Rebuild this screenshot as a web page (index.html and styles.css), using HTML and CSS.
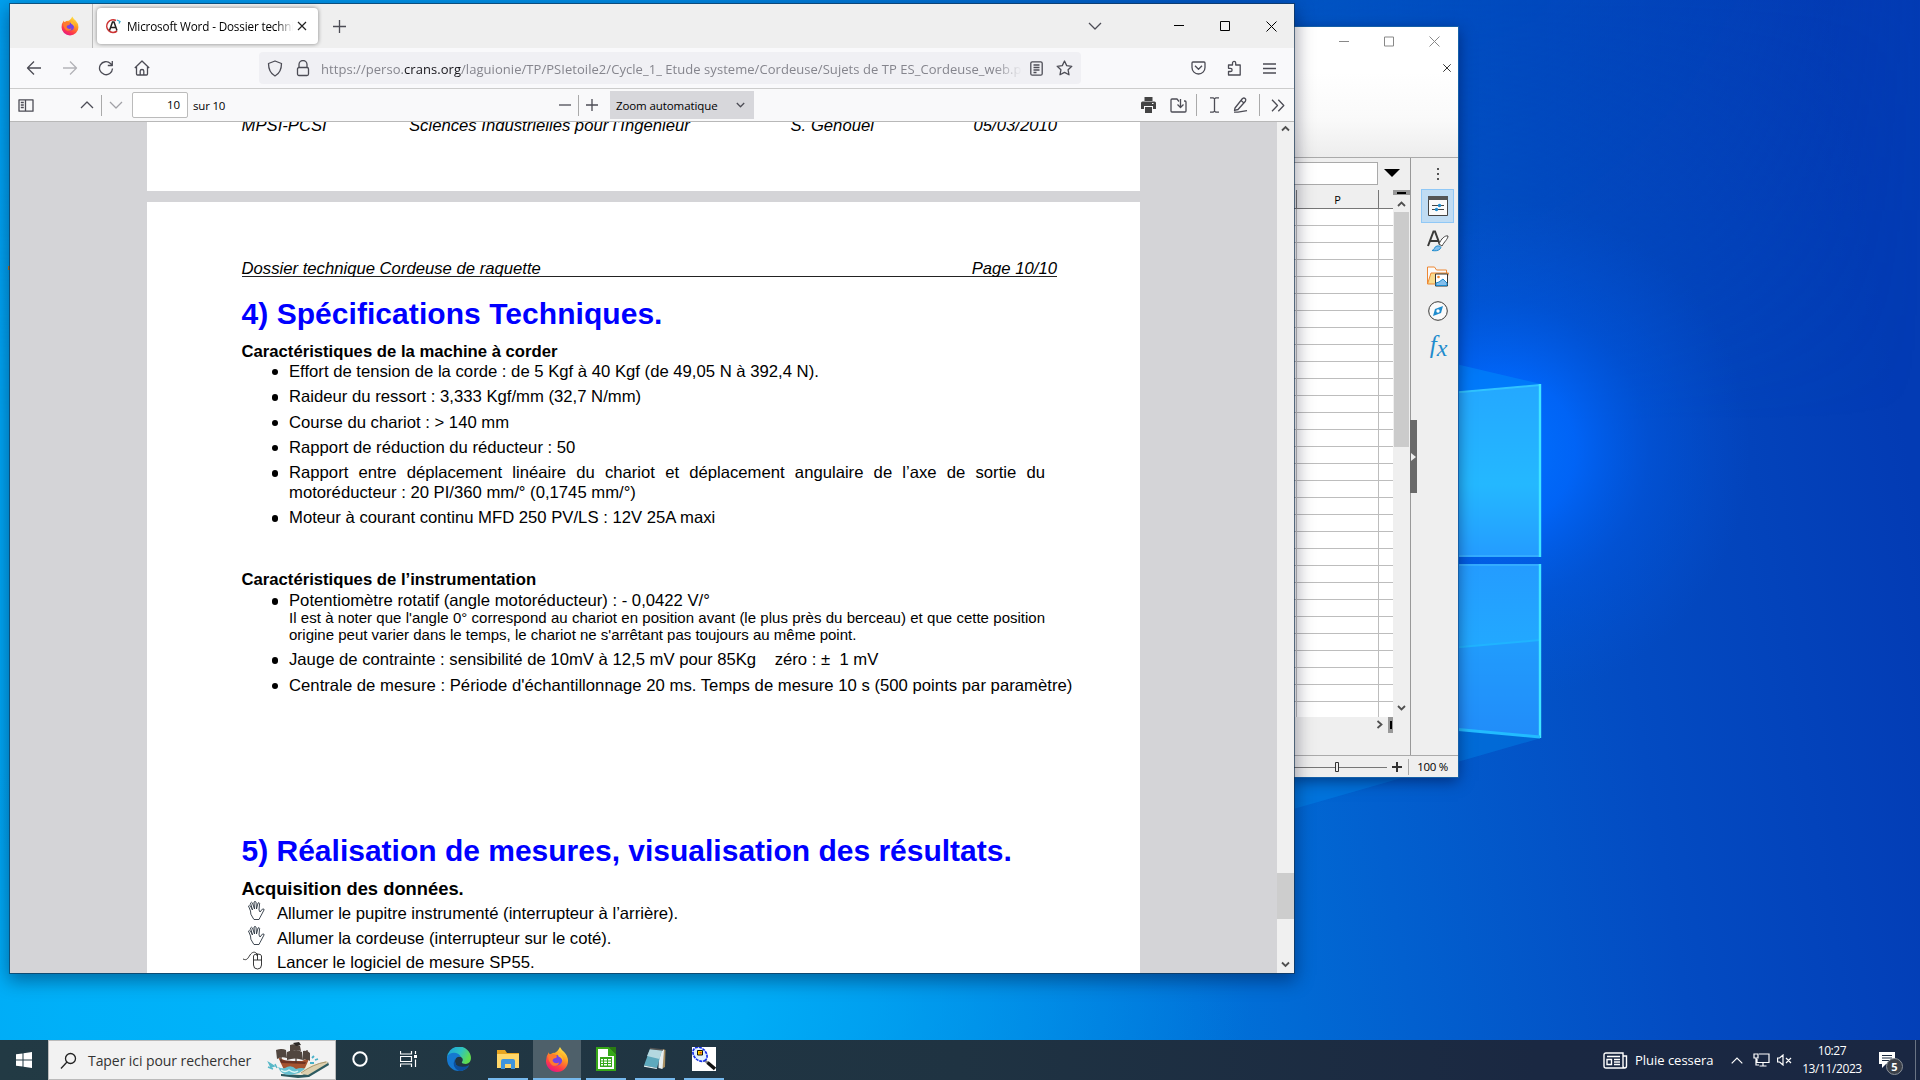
FILE: index.html
```
<!DOCTYPE html>
<html lang="fr">
<head>
<meta charset="utf-8">
<title>Bureau</title>
<link rel="stylesheet" href="styles.css">
</head>
<body>
<main class="desktop">
<svg class="wallpaper" viewBox="0 0 1920 1040" preserveAspectRatio="none" aria-hidden="true">
  <defs>
    <linearGradient id="base" gradientUnits="userSpaceOnUse" x1="0" y1="850" x2="1920" y2="520">
      <stop offset="0" stop-color="#00a8f5"/><stop offset=".35" stop-color="#0098ec"/><stop offset=".58" stop-color="#0074da"/><stop offset=".7" stop-color="#0260cf"/><stop offset=".84" stop-color="#034bc2"/><stop offset="1" stop-color="#033bb4"/>
    </linearGradient>
    <radialGradient id="low" gradientUnits="userSpaceOnUse" cx="0" cy="0" r="1" gradientTransform="translate(400 1010) scale(850 270)">
      <stop offset="0" stop-color="#00b6fb"/><stop offset=".4" stop-color="#00b2f9" stop-opacity=".8"/><stop offset="1" stop-color="#00a0f0" stop-opacity="0"/>
    </radialGradient>
    <radialGradient id="glow" gradientUnits="userSpaceOnUse" cx="1500" cy="450" r="250">
      <stop offset="0" stop-color="#0072ff"/><stop offset=".3" stop-color="#0068ff" stop-opacity=".85"/><stop offset=".6" stop-color="#005cec" stop-opacity=".4"/><stop offset="1" stop-color="#0058e0" stop-opacity="0"/>
    </radialGradient>
    <linearGradient id="pane1" x1="0" y1="0" x2="0" y2="1"><stop offset="0" stop-color="#24a8ff"/><stop offset=".58" stop-color="#24b8ff"/><stop offset="1" stop-color="#249cff"/></linearGradient>
    <linearGradient id="pane2" x1="0" y1="0" x2="0" y2="1"><stop offset="0" stop-color="#249cff"/><stop offset=".45" stop-color="#22a8ff"/><stop offset="1" stop-color="#2192fa"/></linearGradient>
    <linearGradient id="top" x1="0" y1="0" x2="1" y2="0"><stop offset="0" stop-color="#00a0f0"/><stop offset=".35" stop-color="#008ae4"/><stop offset=".62" stop-color="#0058c4"/><stop offset=".8" stop-color="#0048bc" stop-opacity=".7"/><stop offset="1" stop-color="#0339b2" stop-opacity="0"/></linearGradient>
    <linearGradient id="fade" x1="0" y1="0" x2="0" y2="1"><stop offset="0" stop-color="#fff"/><stop offset="1" stop-color="#000"/></linearGradient>
    <mask id="topMask"><rect width="1920" height="420" fill="url(#fade)"/></mask>
  </defs>
  <rect width="1920" height="1040" fill="url(#base)"/>
  <rect width="1920" height="420" fill="url(#top)" mask="url(#topMask)"/>
  <rect width="1920" height="1040" fill="url(#low)"/>
  <circle cx="1500" cy="450" r="250" fill="url(#glow)"/>
  <path d="M1290 325L1541 384L1290 406Z" fill="#00a0ff" opacity=".35"/>
  <path d="M1290 715L1541 738L1290 810Z" fill="#0090f0" opacity=".35"/>
  <path d="M1290 407L1540 385V556H1290Z" fill="url(#pane1)"/>
  <path d="M1290 565H1540V737L1290 714Z" fill="url(#pane2)"/>
  <path d="M1290 662L1540 640V737L1290 714Z" fill="#2080f8" opacity=".3"/>
  <path d="M1290 662L1540 640" stroke="#20b4ff" stroke-width="2"/>
  <path d="M1290 407L1540 385" stroke="#30c4ff" stroke-width="2"/>
  <path d="M1290 556H1540M1290 565H1540" stroke="#34acff" stroke-width="2"/>
  <path d="M1540 384V557M1540 564V738" stroke="#40e6ff" stroke-width="2.4"/>
  <path d="M1290 714L1540 737" stroke="#22bcff" stroke-width="3"/>
  <path d="M9 266v4" stroke="#b77a20" stroke-width="2"/>
</svg>

<section class="calc">
  <header class="calc-head">
    <div class="calc-controls">
      <svg width="10" height="11" viewBox="0 0 10 11"><path d="M0 5.500h10" class="gray"/></svg>
      <svg width="10" height="11" viewBox="0 0 10 11"><path d="M.5 1h9v9h-9z" class="gray"/></svg>
      <svg width="11" height="11" viewBox="0 0 11 11"><path d="M.5.5l10 10M10.500.5l-10 10" class="gray"/></svg>
    </div>
    <svg class="doc-close" width="8" height="8" viewBox="0 0 8 8"><path d="M.3.3l7.400 7.400M7.700.3L.3 7.700" stroke="#333" fill="none"/></svg>
  </header>
  <div class="calc-mid">
    <div class="calc-main">
      <div class="formula"><div class="formula-input"></div><svg width="16" height="8" viewBox="0 0 16 8"><path d="M0 0h16L8 8z"/></svg></div>
      <div class="sheet-area">
        <div class="sheet"><div class="col-head"><span class="col-p">P</span></div><div class="cells"><div class="col-a"></div><div class="col-b"></div></div></div>
        <div class="vscroll"><div class="split"></div>
          <svg width="9" height="6" viewBox="0 0 9 6"><path d="M1 5l3.500-3.500L8 5" class="arrow"/></svg>
          <div class="vthumb"></div>
          <svg width="9" height="6" viewBox="0 0 9 6"><path d="M1 1l3.500 3.500L8 1" class="arrow"/></svg>
        </div>
      </div>
      <div class="hscroll"><svg width="7" height="9" viewBox="0 0 7 9"><path d="M1.500 1l4 3.500-4 3.500" class="arrow"/></svg><i></i></div>
    </div>
    <aside class="sidebar">
      <svg width="4" height="14" viewBox="0 0 4 14"><path d="M1 1h2v2H1zM1 6h2v2H1zM1 11h2v2H1z" fill="#555"/></svg>
      <div class="deck active"><svg width="20" height="20" viewBox="0 0 20 20"><path d="M.5.5h19v19H.5z" fill="#fafafa" stroke="#444"/><path d="M0 0h20v4H0z" fill="#555"/><path d="M4 9.500h12M4 13.500h12" stroke="#444"/><circle cx="11.500" cy="9.500" r="1.700" fill="#1e8bcd"/><circle cx="8.500" cy="13.500" r="1.700" fill="#1e8bcd"/></svg></div>
      <div class="deck"><svg width="22" height="22" viewBox="0 0 22 22"><path d="M1 16L6.500 1.500h1.500L13 15M3 11h8" fill="none" stroke="#3a3a38" stroke-width="2"/><path d="M12 14c2-5 6-9 9-8 0 3-4 6-6 10z" fill="#fff" stroke="#444"/><path d="M5 20.500c3-.5 2-4 5-4.500 3-.4 5 1 3 3-2 2-5 2-8 1.500z" fill="#83beec" stroke="#1e8bcd"/></svg></div>
      <div class="deck"><svg width="22" height="21" viewBox="0 0 22 21"><path d="M.5 18V1h7l2 3h10v3" fill="#fafafa" stroke="#ed8733"/><path d="M.5 18L4 7h17.500L18 18z" fill="#f8db8f" stroke="#ed8733"/><path d="M8.500 8h12v12h-12z" fill="#fff" stroke="#333"/><circle cx="11.500" cy="11" r="1.300" fill="#ed8733"/><path d="M9 19.500V17l3-1 4-3 4 4v2.500z" fill="#83beec" stroke="#1e8bcd"/></svg></div>
      <div class="deck"><svg width="20" height="20" viewBox="0 0 20 20"><circle cx="10" cy="10" r="9.300" fill="#fafafa" stroke="#3a3a38"/><path d="M15 5l-2 7-8 3 2-7z" fill="#1e8bcd"/><circle cx="10" cy="10" r="1.700" fill="#fff"/></svg></div>
      <div class="deck fx"><span>f</span><span class="x">x</span></div>
    </aside>
    <div class="handle"><svg width="5" height="8" viewBox="0 0 5 8"><path d="M0 0l5 4-5 4z" fill="#eee"/></svg></div>
  </div>
  <footer class="calc-status">
    <svg width="112" height="12" viewBox="0 0 112 12"><path d="M0 6.500h93" stroke="#777"/><path d="M41.500 1.500h3v9h-3z" fill="#eee" stroke="#333"/><path d="M98 6h10M103 1v10" stroke="#333" stroke-width="2"/></svg>
    <span class="zoomval">100 %</span>
  </footer>
</section>

<section class="browser">
  <header class="tabs">
    <div class="pinned"><svg width="18" height="20" viewBox="0 0 32 34"><use href="#fox"/></svg></div>
    <div class="tab">
      <svg width="16" height="16" viewBox="0 0 16 16"><path d="M11 2.500A6.300 6.300 0 1 0 12 13" fill="none" stroke="#c33" stroke-width="1.600"/><path d="M4.500 12.500L7.500 4h1.500l3 8.500M5.500 9.500h5" fill="none" stroke="#222" stroke-width="1.500"/><path d="M12 2l3 1.500-1 2" stroke="#3ac" fill="none" stroke-width="1.300"/></svg>
      <span class="tab-title">Microsoft Word - Dossier technique</span>
      <svg width="10" height="10" viewBox="0 0 10 10"><path d="M1 1l8 8M9 1L1 9" stroke="#222" stroke-width="1.200"/></svg>
    </div>
    <svg class="plus" width="13" height="13" viewBox="0 0 13 13"><path d="M0 6.500h13M6.500 0v13" class="ink"/></svg>
    <div class="controls">
      <svg class="tablist" width="14" height="8" viewBox="0 0 14 8"><path d="M1 1l6 6 6-6" class="ink"/></svg>
      <svg width="10" height="10" viewBox="0 0 10 10"><path d="M0 4.500h10" stroke="#000"/></svg>
      <svg width="10" height="10" viewBox="0 0 10 10"><path d="M.5.5h9v9h-9z" fill="none" stroke="#000"/></svg>
      <svg width="11" height="11" viewBox="0 0 11 11"><path d="M.5.5l10 10M10.500.5l-10 10" stroke="#000" fill="none"/></svg>
    </div>
  </header>
  <nav class="navbar">
    <div class="navbtns">
      <svg width="16" height="16" viewBox="0 0 16 16"><path d="M15 8H1.500M8 1.500L1.500 8 8 14.500" class="ink"/></svg>
      <svg width="16" height="16" viewBox="0 0 16 16" opacity=".4"><path d="M1 8h13.500M8 1.500L14.500 8 8 14.500" class="ink"/></svg>
      <svg width="16" height="16" viewBox="0 0 16 16"><path d="M14.500 8.500A6.500 6.500 0 1 1 12.500 3.500L14 5M14.300 1v4.500H9.800" class="ink"/></svg>
      <svg width="16" height="16" viewBox="0 0 16 16"><path d="M.8 8L8 1l7.200 7M2.500 7v7q0 1 1 1h9q1 0 1-1V7M6.200 15v-4q0-1.500 1.800-1.500T9.800 11v4" class="ink"/></svg>
    </div>
    <div class="urlbar">
      <svg width="16" height="17" viewBox="0 0 16 17"><path d="M8 1l6.500 2.500q0 9-6.500 12.500Q1.500 12.500 1.500 3.500z" class="ink"/></svg>
      <svg width="14" height="17" viewBox="0 0 14 17"><path d="M3 8V4.500a4 4 0 0 1 8 0V8" class="ink"/><rect x="1.500" y="7.500" width="11" height="8" rx="1.500" class="ink"/></svg>
      <span class="url">https://perso.<b>crans.org</b>/laguionie/TP/PSIetoile2/Cycle_1_ Etude systeme/Cordeuse/Sujets de TP ES_Cordeuse_web.pdf</span>
      <svg width="13" height="15" viewBox="0 0 13 15"><rect x=".8" y=".8" width="11.400" height="13.400" rx="1.500" class="ink"/><path d="M3.500 4h6M3.500 6.500h6M3.500 9h6M3.500 11.500h3" class="ink"/></svg>
      <svg width="17" height="16" viewBox="0 0 17 16"><path d="M8.500 1l2.200 4.600 5.100.7-3.700 3.500.9 5-4.500-2.400L4 14.800l.9-5L1.200 6.300l5.100-.7z" class="ink"/></svg>
    </div>
    <div class="navright">
      <svg width="15" height="14" viewBox="0 0 15 14"><path d="M1 2q0-1 1-1h11q1 0 1 1v4.500a6.500 6.500 0 0 1-13 0zM4 4.800l3.500 3.500L11 4.800" class="ink"/></svg>
      <svg width="15" height="16" viewBox="0 0 15 16"><path d="M1.500 5h4V3a1.600 1.600 0 0 1 3.200 0v2h4.500v10H1.500v-3.500h2a1.600 1.600 0 0 0 0-3.200h-2z" class="ink"/></svg>
      <svg width="13" height="11" viewBox="0 0 13 11"><path d="M0 1h13M0 5.500h13M0 10h13" class="ink"/></svg>
    </div>
  </nav>
  <div class="pdfbar">
    <svg class="side" width="16" height="13" viewBox="0 0 16 13"><path d="M1 .8h14v11.400H1zM7.500 1v11M2.800 3.500h3M2.800 6h3M2.800 8.500h3" class="ink"/></svg>
    <svg width="14" height="8" viewBox="0 0 14 8"><path d="M1 7l6-6 6 6" class="ink"/></svg>
    <i class="sep"></i>
    <svg width="14" height="8" viewBox="0 0 14 8" opacity=".5"><path d="M1 1l6 6 6-6" class="ink"/></svg>
    <span class="pageno">10</span><span class="total">sur 10</span>
    <div class="zoomctl">
      <svg width="12" height="12" viewBox="0 0 12 12"><path d="M0 6h12" class="ink"/></svg>
      <i class="sep"></i>
      <svg width="12" height="12" viewBox="0 0 12 12"><path d="M0 6h12M6 0v12" class="ink"/></svg>
      <div class="select"><span>Zoom automatique</span><svg width="9" height="6" viewBox="0 0 9 6"><path d="M.8 1l3.700 3.700L8.200 1" class="ink"/></svg></div>
    </div>
    <div class="tools">
      <svg width="15" height="16" viewBox="0 0 15 16"><path d="M3.500 0h8v4h-8zM1.500 4.500h12q1.500 0 1.500 1.500v6h-3V9H3v3H0V6q0-1.500 1.500-1.500zM4 10h7v6H4z" fill="#444"/><path d="M11 6h1.500v1H11z" fill="#fff"/></svg>
      <svg width="17" height="15" viewBox="0 0 17 15"><path d="M9 3.500l-2-2.500H2q-1 0-1 1v11q0 1 1 1h13q1 0 1-1V4q0-1-1-1h-1M10.500 1v8M7.500 6.500l3 3 3-3" class="ink"/></svg>
      <i class="sep"></i>
      <svg width="9" height="16" viewBox="0 0 9 16"><path d="M0 .8h3l1.500 1L6 .8h3M4.500 1.800v12.400M0 15.200h3l1.500-1 1.500 1h3" class="ink"/></svg>
      <svg width="15" height="16" viewBox="0 0 15 16"><path d="M2 11L9.500 1.500q1.500-1 2.600 0t.3 2.700L5 12.500l-3.500.8zM8 3.500L11 6M1 15.200h4l9-1.500" class="ink"/></svg>
      <i class="sep"></i>
      <svg width="14" height="13" viewBox="0 0 14 13"><path d="M1 .8l5.500 5.700L1 12.200M7.300.8l5.500 5.700-5.500 5.700" class="ink"/></svg>
    </div>
  </div>
  <div class="viewer">
    <div class="pages">
      <article class="page first"><p class="foot"><span>MPSI-PCSI</span><span>Sciences Industrielles pour l’Ingénieur</span><span>S. Génouël</span><span>05/03/2010</span></p></article>
      <article class="page second">
        <p class="runhead"><span>Dossier technique Cordeuse de raquette</span><span>Page 10/10</span></p>
        <h1>4) Spécifications Techniques.</h1>
        <h2>Caractéristiques de la machine à corder</h2>
        <ul class="specs">
          <li>Effort de tension de la corde : de 5 Kgf à 40 Kgf (de 49,05 N à 392,4 N).</li>
          <li>Raideur du ressort : 3,333 Kgf/mm (32,7 N/mm)</li>
          <li>Course du chariot : &gt; 140 mm</li>
          <li>Rapport de réduction du réducteur : 50</li>
          <li><span class="just">Rapport entre déplacement linéaire du chariot et déplacement angulaire de l’axe de sortie du</span><span class="ln">motoréducteur : 20 PI/360 mm/° (0,1745 mm/°)</span></li>
          <li>Moteur à courant continu MFD 250 PV/LS : 12V 25A maxi</li>
        </ul>
        <h2 class="instr">Caractéristiques de l’instrumentation</h2>
        <ul class="specs">
          <li>Potentiomètre rotatif (angle motoréducteur) : - 0,0422 V/°<span class="just note lead">Il est à noter que l'angle 0° correspond au chariot en position avant (le plus près du berceau) et que cette position</span><span class="ln note">origine peut varier dans le temps, le chariot ne s'arrêtant pas toujours au même point.</span></li>
          <li class="gauge">Jauge de contrainte : sensibilité de 10mV à 12,5 mV pour 85Kg &nbsp;&nbsp; zéro : ± &nbsp;1 mV</li>
          <li class="last">Centrale de mesure : Période d'échantillonnage 20 ms. Temps de mesure 10 s (500 points par paramètre)</li>
        </ul>
        <h1 class="five">5) Réalisation de mesures, visualisation des résultats.</h1>
        <h2 class="acq">Acquisition des données.</h2>
        <ul class="steps">
          <li><svg width="36" height="20" viewBox="0 0 36 20"><use href="#hand"/></svg>Allumer le pupitre instrumenté (interrupteur à l’arrière).</li>
          <li><svg width="36" height="20" viewBox="0 0 36 20"><use href="#hand"/></svg>Allumer la cordeuse (interrupteur sur le coté).</li>
          <li><svg width="36" height="20" viewBox="0 0 36 20"><path d="M1 9c4 2 5-1 7-4s5-4 7-1v2M11.500 6q0-2 4-2t4 2v9q0 4-4 4t-4-4zM11.500 10h8M15.500 4v6" fill="none" stroke="#222" stroke-width=".9"/></svg>Lancer le logiciel de mesure SP55.</li>
        </ul>
      </article>
    </div>
    <div class="scroll"><svg width="9" height="7" viewBox="0 0 9 7"><path d="M1 5.500L4.500 2 8 5.500" class="arrow"/></svg><div class="thumb"></div><svg width="9" height="7" viewBox="0 0 9 7"><path d="M1 1.500L4.500 5 8 1.500" class="arrow"/></svg></div>
  </div>
</section>
</main>

<footer class="taskbar">
  <div class="start"><svg width="16" height="16" viewBox="0 0 16 16"><path d="M0 2.300l6.500-.9v6.100H0zM7.500 1.200L16 0v7.500H7.500zM0 8.500h6.500v6.100L0 13.700zM7.500 8.500H16V16l-8.500-1.200z" fill="#fff"/></svg></div>
  <div class="search">
    <svg width="17" height="17" viewBox="0 0 17 17"><circle cx="10.500" cy="6.500" r="5" fill="none" stroke="#222" stroke-width="1.300"/><path d="M7 10l-6 6.500" stroke="#222" stroke-width="1.300"/></svg>
    <span>Taper ici pour rechercher</span>
    <svg class="ship" width="64" height="38" viewBox="0 0 64 38"><path d="M14 33l20 1 7-2 20-11 1 3-20 12-11 1-17-2z" fill="#2c5a60"/><path d="M22 32q12-8 22-11l5 2-14 11z" fill="#f2ead6"/><path d="M34 33q10-10 26-13l1 2-20 12z" fill="#dccfae"/><path d="M34 32q12-9 25-11" stroke="#a8966c" fill="none"/><path d="M11 16l8 4 16 0 8-4-5 11-6 4H18z" fill="#a5532f"/><path d="M13 19l26 2-1 2-24-1z" fill="#6e3322"/><path d="M2 22l5 3-3 1zM8 23l2 4M1 26l5 2" stroke="#58b8c8" stroke-width="1.500" fill="#58b8c8"/><path d="M11 26q4 2 7 1 6-4 11 1 6-2 9 0l-6 4-9 2q-9 0-12-8z" fill="#66c0d0"/><path d="M14 29q4 3 8 0 5 4 9 1" stroke="#dff6f6" fill="none" stroke-width="1.300"/><path d="M29 2v20M14 8v12M40 9v10" stroke="#49382f" stroke-width="1.200"/><path d="M9 9q6-2 10 0l1 8q-6-2-10 1zM20 11q8-4 15 0l1 8q-8-3-16 0zM23 4q5-2 10 1l1 5q-6-2-11 0zM36 10q4-1 7 2v8q-3-3-7-1z" fill="#51463f"/><path d="M26 2l6-1 2 3-5 1z" fill="#2e2a28"/><path d="M45 17l2-2M43 22l4 0M48 19l3-1" stroke="#48b0c8" stroke-width="1.800"/></svg>
  </div>
  <div class="app plain"><svg width="18" height="18" viewBox="0 0 18 18"><circle cx="9" cy="9" r="6.700" fill="none" stroke="#fff" stroke-width="2"/></svg></div>
  <div class="app plain"><svg width="17" height="16" viewBox="0 0 17 16"><path d="M.5 0v3h11V0M.5 16v-3h11v3M.5 5.500h11v5H.5zM15.500 0v3M15.500 8.500V16" fill="none" stroke="#fff" stroke-width="1.200"/><path d="M14 4h3v3h-3z" fill="#fff"/></svg></div>
  <div class="app"><svg width="24" height="24" viewBox="0 0 24 24"><defs><linearGradient id="eg" x1="0" y1="0" x2="1" y2=".4"><stop offset="0" stop-color="#1aa0e0"/><stop offset=".6" stop-color="#2fc3c0"/><stop offset="1" stop-color="#5fdc50"/></linearGradient></defs><path d="M0 12A12 12 0 0 1 24 11q0 5-5 6-5 0-4-2 2-3-1-5Q8 6 0 12z" fill="url(#eg)"/><path d="M0 12q0-5 5-6 6-1 9 4-5-1-6 4 0 6 7 7 4 0 7-3-3 6-10 6A12 12 0 0 1 0 12z" fill="#1578cf"/><path d="M8 12q-2 10 14 7-4 5-10 5Q4 20 8 12z" fill="#0c4f9c"/></svg></div>
  <div class="app run"><svg width="22" height="19" viewBox="0 0 22 19"><path d="M0 0h8l2 3h12v15H0z" fill="#e8a520"/><path d="M0 4h22v14H0z" fill="#ffd76a"/><path d="M4 19v-8q0-2 2-2h10q2 0 2 2v8h-4v-5H8v5z" fill="#3e94dc"/></svg></div>
  <div class="app run on"><svg width="24" height="25" viewBox="0 0 32 34"><defs><linearGradient id="fg" x1=".8" y1="0" x2=".3" y2="1"><stop offset="0" stop-color="#fff04a"/><stop offset=".4" stop-color="#ff9a20"/><stop offset=".75" stop-color="#ff3b47"/><stop offset="1" stop-color="#e31587"/></linearGradient></defs><g id="fox"><path d="M20 0q2 4 6 7 5 5 5 12a15 15 0 0 1-30 0Q1 12 5 7q0 3 2 3 4-3 5-2 5-1 8-8z" fill="url(#fg)"/><circle cx="16" cy="18" r="7" fill="#7543e3"/><path d="M4 12q6-5 12 0l-1 3q-5 0-5 4 3 5 9 2-2 6-9 4-6-4-6-13z" fill="#ff7a2e"/><path d="M17 8q8 3 7 11-2-5-6-6z" fill="#ffbd2e"/></g></svg></div>
  <div class="app run"><svg width="20" height="24" viewBox="0 0 20 24"><path d="M0 0h13l7 7v17H0z" fill="#36a818"/><path d="M2 2h10v7h6v13H2z" fill="#fff"/><path d="M13 0h7v7z" fill="#2a7c12"/><path d="M4 10h12v10H4z" fill="#36a818"/><path d="M5 12h2v1.500H5zM8 12h3v1.500H8zM12 12h3v1.500h-3zM5 14.500h2V16H5zM8 14.500h3V16H8zM12 14.500h3V16h-3zM5 17h2v1.500H5zM8 17h3v1.500H8zM12 17h3v1.500h-3z" fill="#fff"/></svg></div>
  <div class="app run"><svg width="24" height="24" viewBox="0 0 24 24"><path d="M20 2l2.500 1-.5 17-4 2z" fill="#a88f62"/><path d="M16 2l5 1-1.500 19-4-1z" fill="#e6eef0"/><path d="M7 2l12 1-5 18-13-2.500z" fill="#5ea9bd"/><path d="M7 2l12 1-2.500 9L4 9z" fill="#b4d8e0"/><path d="M1 18.500L14 21l-.3 1L1 19.700z" fill="#e8f4f6"/><path d="M7 1.500l13 1.500" stroke="#555" stroke-width="1.500"/></svg></div>
  <div class="app run"><svg width="24" height="24" viewBox="0 0 24 24"><path d="M0 0h24v24H0z" fill="#fff"/><path d="M12 13l4 3" stroke="#888" stroke-width="2.500"/><path d="M15.500 15.500L23 22" stroke="#111" stroke-width="3.500"/><ellipse cx="8" cy="7.300" rx="8" ry="6" transform="rotate(45 8 7.300)" fill="#e2f2ff" stroke="#1530e8" stroke-width="1.700" stroke-dasharray="3 .8"/><path d="M5.500 3.500h5v4.500h-5z" fill="#ffd800" stroke="#111"/><path d="M7.500 5h2v1.500h-2z" fill="#d22"/></svg></div>
  <div class="tray">
    <svg width="25" height="17" viewBox="0 0 25 17"><path d="M1 3q0-2 2-2h17v13q0 2 2 2H3q-2 0-2-2zM20 4h3.500v10q0 2-2 2M4 4.500h13M11 7.500h6M11 10h6M11 12.500h6M4 7.500h4.500v5H4z" fill="none" stroke="#fff" stroke-width="1.400"/></svg>
    <span class="weather">Pluie cessera</span>
    <svg class="up" width="12" height="7" viewBox="0 0 12 7"><path d="M.7 6.300L6 1l5.300 5.300" class="wh"/></svg>
    <svg class="net" width="17" height="14" viewBox="0 0 17 14"><path d="M6 1h10v8.500H4V6M10 9.500V13M6.500 13h7M1 1h4v4H1zM3 5v7h3" class="wh"/></svg>
    <svg class="vol" width="15" height="12" viewBox="0 0 15 12"><path d="M.6 4h2L6 1v10L2.600 8h-2zM9 4l5 5M14 4L9 9" class="wh"/></svg>
    <div class="clock"><span>10:27</span><span>13/11/2023</span></div>
    <div class="notif"><svg width="17" height="16" viewBox="0 0 17 16"><path d="M0 0h16v12H7l-4 4v-4H0z" fill="#fff"/><path d="M3 3.500h10M3 6h10M3 8.500h7" stroke="#1b2a40"/></svg><b>5</b></div>
    <i class="peek"></i>
  </div>
</footer>
<svg width="0" height="0" class="defs"><defs><g id="hand" fill="#fff" stroke="#2a3440" stroke-width=".9" stroke-linejoin="round"><path d="M11 17Q8 13 8.500 10L6.500 5q1-1.500 2 0l2 4-2-7q1-1.500 2 0l2 6L12 1q1.300-1.200 2 0l.5 7L16 2q1.300-.8 1.600.3L17 9l1 2 2.500-3q2-.5 1.500 1l-4 7.500-1 2h-5z"/></g></defs></svg>
</body>
</html>
```
FILE: styles.css
```
* { box-sizing: border-box; }
body { margin: 0; width: 1920px; height: 1080px; overflow: hidden; display: flex; flex-direction: column; font-family: "Open Sans", sans-serif; font-size: 12px; color: #000; }
svg { display: block; flex: none; }
.defs { position: absolute; }
.desktop { position: relative; flex: none; height: 1040px; overflow: hidden; }
.wallpaper { position: absolute; inset: 0; width: 1920px; height: 1040px; }
.ink { fill: none; stroke: #4c4c55; stroke-width: 1.3; stroke-linejoin: round; }
.gray { fill: none; stroke: #888; }
.arrow { fill: none; stroke: #505050; stroke-width: 1.8; }
.wh { fill: none; stroke: #fff; stroke-width: 1.2; }

/* Spreadsheet window */
.calc { position: absolute; left: 1290px; top: 27px; width: 168px; height: 750px; display: flex; flex-direction: column; background: #efefef; box-shadow: 0 0 0 1px #1560a8, 0 4px 14px rgba(0,0,40,.5); }
.calc-head { height: 131px; flex: none; background: linear-gradient(#fff 35%, #fafafa 70%, #ededed); border-bottom: 1px solid #aaa; padding: 9px 18px 0 0; display: flex; flex-direction: column; align-items: flex-end; }
.calc-controls { display: flex; gap: 35px; }
.doc-close { margin: 17px -11px 0 0; }
.calc-mid { flex: 1; display: flex; position: relative; min-height: 0; }
.calc-main { width: 120px; display: flex; flex-direction: column; }
.formula { height: 32px; display: flex; align-items: center; gap: 6px; padding-bottom: 2px; }
.formula-input { width: 88px; height: 23px; border: 1px solid #aaa; background: #fff; border-left: 0; }
.formula svg { margin: -1px 0 0 0; }
.sheet-area { height: 527px; display: flex; }
.sheet { width: 103px; display: flex; flex-direction: column; }
.col-head { height: 19px; flex: none; border-bottom: 1px solid #777; display: flex; padding-left: 6px; font-size: 11px; line-height: 19px; }
.col-p { width: 83px; text-align: center; border: solid #777; border-width: 0 1px; }
.cells { flex: 1; display: flex; padding-left: 6px; background: repeating-linear-gradient(#fff 0 16px, #bdbdbd 16px 17px); }
.col-a { width: 83px; border: solid #bdbdbd; border-width: 0 1px; }
.vscroll { width: 17px; display: flex; flex-direction: column; align-items: center; padding-bottom: 6px; }
.split { width: 17px; height: 5px; border: solid #999; border-width: 2px 4px 1px; background: #000; }
.vscroll > svg { margin-top: 6px; }
.vthumb { width: 15px; height: 235px; background: #cbcbcb; margin: 5px 0 auto; }
.hscroll { display: flex; justify-content: flex-end; align-items: center; height: 15px; gap: 5px; padding-right: 17px; }
.hscroll i { width: 5px; height: 16px; border: solid #999; border-width: 4px 1px 4px 2px; background: #000; }
.sidebar { width: 48px; border-left: 1px solid #999; display: flex; flex-direction: column; align-items: center; padding: 9px 0 0 6px; }
.deck { width: 33px; height: 34px; margin-bottom: 1px; display: flex; align-items: center; justify-content: center; }
.deck.active { margin-top: 8px; background: #c0dcf3; border: 1px solid #90c8f6; }
.fx { font: italic 25px/1 "Liberation Serif", serif; color: #1e8bcd; padding: 0 0 3px 2px; }
.fx .x { margin-top: 7px; font-size: 24px; }
.handle { position: absolute; left: 120px; top: 262px; width: 7px; height: 73px; background: #696969; display: flex; align-items: center; padding-left: 1px; }
.calc-status { height: 22px; flex: none; border-top: 1px solid #aaa; display: flex; align-items: center; padding-left: 4px; font-size: 11.500px; }
.zoomval { flex: 1; height: 16px; line-height: 16px; border-left: 1px solid #aaa; margin-left: 2px; padding-right: 2px; text-align: center; letter-spacing: -.3px; }

/* Browser window */
.browser { position: absolute; left: 10px; top: 4px; width: 1284px; height: 969px; display: flex; flex-direction: column; background: #efefef; box-shadow: 0 0 0 1px rgba(20,50,80,.65), 0 6px 17px 2px rgba(0,0,30,.38); }
.tabs { height: 44px; flex: none; display: flex; align-items: center; background: #efefef; }
.pinned { width: 83px; height: 44px; border-right: 1px solid #bbb; display: flex; align-items: center; padding-left: 51px; }
.tab { margin: 0 0 0 4px; width: 221px; height: 36px; background: #fff; border-radius: 4px; box-shadow: 0 0 4px rgba(0,0,0,.45); display: flex; align-items: center; padding: 0 11px 0 8px; }
.tab-title { width: 167px; margin: 0 4px 0 6px; overflow: hidden; white-space: nowrap; font-size: 11.700px; letter-spacing: -.15px; -webkit-mask-image: linear-gradient(90deg, #000 90%, transparent); mask-image: linear-gradient(90deg, #000 90%, transparent); }
.plus { margin-left: 15px; }
.controls { margin-left: auto; display: flex; align-items: center; gap: 36px; padding-right: 17.500px; }
.tablist { margin-right: 36px; }
.navbar { height: 41px; flex: none; display: flex; align-items: center; background: #f9f9fb; border-bottom: 1px solid #ccc; }
.navbtns { width: 249px; display: flex; gap: 20px; padding-left: 16px; }
.urlbar { width: 822px; height: 32px; border-radius: 4px; background: #f0f0f4; display: flex; align-items: center; padding: 0 8px; }
.urlbar svg + svg { margin-left: 13px; }
.url { width: 701px; margin: 2px 8px 0 11px; overflow: hidden; white-space: nowrap; color: #85858d; font-size: 13px; letter-spacing: .05px; line-height: 20px; -webkit-mask-image: linear-gradient(90deg, #000 96%, transparent); mask-image: linear-gradient(90deg, #000 96%, transparent); }
.url b { font-weight: 400; color: #15141a; }
.navright { margin-left: auto; display: flex; align-items: center; gap: 21px; padding-right: 18px; }
.pdfbar { height: 33px; flex: none; display: flex; align-items: center; background: #f9f9fa; border-bottom: 1px solid #b8b8b8; font-size: 11.500px; letter-spacing: -.1px; }
.side { margin: 0 46px 0 8px; }
.sep { width: 1px; height: 21px; background: #aaa; margin: 0 7px; }
.pageno { width: 56px; height: 26px; margin-left: 9px; border: 1px solid #bbb; border-radius: 2px; background: #fff; text-align: right; padding-right: 7px; line-height: 24px; }
.total { margin-left: 5px; letter-spacing: -.2px; }
.zoomctl { display: flex; align-items: center; margin-left: auto; }
.select { margin-left: 12px; width: 144px; height: 28px; background: #d7d7db; display: flex; align-items: center; justify-content: space-between; padding: 0 9px 0 6px; }
.tools { display: flex; align-items: center; margin-left: 387px; padding-right: 9px; }
.tools svg + svg { margin-left: 14px; }
.tools .sep { height: 22px; margin: 0 13px 0 9px; }
.tools .sep:last-of-type { margin: 0 11px; }
.viewer { flex: 1; min-height: 0; display: flex; background: #d4d4d7; }
.pages { flex: 1; padding-left: 137px; overflow: hidden; display: flex; flex-direction: column; }
.scroll { width: 17px; background: #f0f0f0; display: flex; flex-direction: column; align-items: center; padding: 3px 0 5px; }
.thumb { width: 17px; height: 46px; background: #cdcdcd; margin: 741px 0 auto; }

/* Document */
.page { width: 993px; background: #fff; flex: none; font-family: "Liberation Sans", Arial, sans-serif; padding: 0 83px 0 94.500px; font-size: 16.680px; line-height: 20px; }
.page p, .page h1, .page h2, .page ul { margin: 0; padding: 0; list-style: none; }
.first { height: 69px; overflow: hidden; margin-bottom: 11px; }
.page .foot { display: grid; grid-template-columns: 167.500px 381.500px 1fr auto; font-style: italic; margin-top: -6px; white-space: nowrap; }
.second { height: 780px; padding-top: 57px; }
.second .runhead { display: flex; justify-content: space-between; font-style: italic; height: 18px; border-bottom: 1.500px solid #222; line-height: 20px; }
.page h1 { font-size: 30px; letter-spacing: .05px; line-height: 36px; color: #00f; white-space: nowrap; }
.page .runhead + h1 { margin-top: 19px; }
.page h2 { font-size: 16.680px; line-height: 20px; margin-top: 9px; white-space: nowrap; }
.page h1:not(.five) + h2 { margin-top: 10px; }
.page .specs { padding-left: 47.500px; }
.specs li { white-space: nowrap; width: 756px; margin-bottom: 5.300px; position: relative; }
.specs li::before { content: ""; position: absolute; left: -17px; top: 7px; width: 6.400px; height: 6.400px; border-radius: 50%; background: #000; }
.specs .last { letter-spacing: .02px; }
.specs .gauge { margin-top: 7.300px; }
.just, .ln { display: block; }
.just { white-space: normal; text-align-last: justify; }
.page .note { font-size: 15px; line-height: 17px; }
.page .lead { margin-top: -2.500px; }
.page .instr { margin-top: 42px; }
.instr + .specs { padding-top: 1px; }
.page .five { letter-spacing: 0; margin-top: 137px; }
.page .acq { font-size: 18.350px; margin-top: 8px; line-height: 24px; }
.page .steps { padding-top: 1.500px; }
.steps li { display: flex; height: 24.700px; line-height: 24.700px; white-space: nowrap; }
.steps svg { margin: -1px -.5px 0 0; }

/* Taskbar */
.taskbar { height: 40px; flex: none; display: flex; background: linear-gradient(90deg, #223a44, #1f3342 50%, #1a2842 80%, #1a2742); color: #fff; }
.start { width: 48px; display: flex; align-items: center; justify-content: center; }
.search { width: 288px; background: #f2f2f2; border: 1px solid #bbb; color: #333; display: flex; align-items: center; padding: 0 0 0 11px; }
.search span { width: 166px; margin: 0 13px 0 11px; font-size: 14px; white-space: nowrap; letter-spacing: -.07px; }
.app { width: 49px; display: flex; align-items: center; justify-content: center; border-bottom: 2px solid transparent; }
.plain { padding-right: 2px; }
.run { width: 40px; margin: 0 4.500px; border-color: #76b9ed; }
.on { width: 48px; margin: 0 .5px; background: #4e606a; }
.tray { margin-left: auto; display: flex; align-items: center; }
.weather { width: 79px; margin: 0 17px 0 7px; font-size: 13px; letter-spacing: -.02px; white-space: nowrap; }
.net { margin-left: 10px; }
.vol { margin-left: 7px; }
.clock { width: 62px; margin: 0 16px 0 9px; display: flex; flex-direction: column; align-items: center; font-size: 12px; line-height: 18px; letter-spacing: -.4px; white-space: nowrap; }
.notif { position: relative; width: 17px; }
.notif b { position: absolute; left: 7px; top: 6px; width: 17px; height: 17px; border-radius: 50%; background: #3a3f48; border: 1px solid #8a9098; font-size: 11px; line-height: 15px; text-align: center; }
.peek { width: 1px; height: 40px; background: #6a7484; margin: 0 4px 0 19px; }
```
